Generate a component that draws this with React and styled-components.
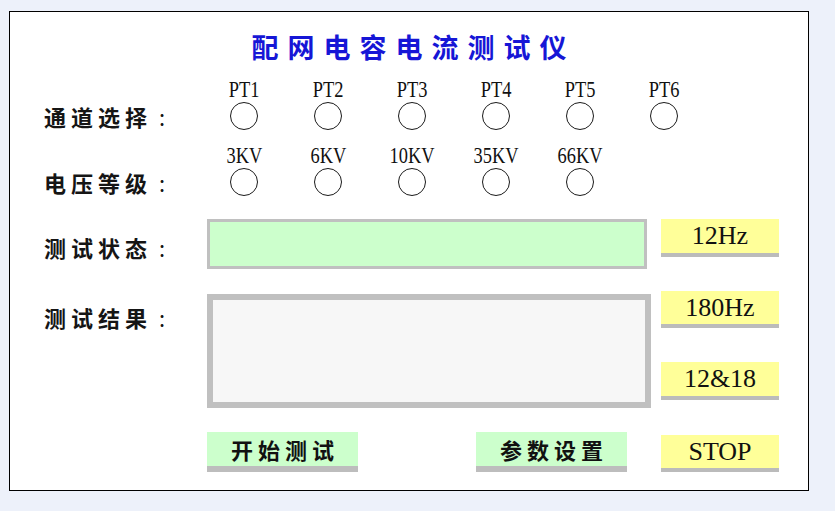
import React from 'react';
import styled, { createGlobalStyle } from 'styled-components';

const Global = createGlobalStyle`
  html, body { margin: 0; padding: 0; background: #edf1fa; }
  body { width: 835px; height: 511px; overflow: hidden; }
`;

const Page = styled.div`
  padding: 11px 0 0 9px;
`;

const Panel = styled.div`
  width: 798px;
  height: 478px;
  border: 1px solid #000;
  background: #fff;
  display: flex;
  flex-direction: column;
`;

const Title = styled.h1`
  margin: 20px 0 0 0;
  padding-left: 9px;
  text-align: center;
  font-family: "Noto Sans CJK SC", sans-serif;
  font-weight: 700;
  font-size: 27px;
  line-height: 30px;
  letter-spacing: 9px;
  color: #1616d6;
`;

const OptionRow = styled.div`
  display: flex;
  align-items: flex-end;
  margin-top: ${p => p.$top}px;
  padding-left: 34px;
`;

const Label = styled.div`
  width: ${p => p.$w}px;
  flex: none;
  display: flex;
  align-items: center;
  height: 28px;
  font-family: "Noto Sans CJK SC", sans-serif;
  font-weight: 700;
  font-size: 22px;
  letter-spacing: 5px;
  color: #151515;
  white-space: nowrap;
`;

const Colon = styled.span`
  margin-left: 7px;
  letter-spacing: 0;
  font-weight: 400;
`;

const RadioGroup = styled.div`
  display: flex;
`;

const RadioItem = styled.label`
  width: 84px;
  display: flex;
  flex-direction: column;
  align-items: center;
  gap: 1px;
`;

const RadioText = styled.span`
  display: block;
  font-family: "Liberation Serif", serif;
  font-size: 23px;
  line-height: 23px;
  color: #111;
  transform: scaleX(0.8);
`;

const Circle = styled.span`
  display: block;
  width: 28px;
  height: 28px;
  box-sizing: border-box;
  border: 1.6px solid #1a1a1a;
  border-radius: 50%;
  background: #fff;
`;

const Lower = styled.div`
  display: grid;
  grid-template-columns: 163px 454px 118px;
  margin-top: ${p => p.$top}px;
  padding-left: 34px;
`;

const Cell = styled.div`
  display: flex;
  flex-direction: column;
  padding-top: ${p => p.$pt || 0}px;
  gap: ${p => p.$gap || 0}px;
`;

const StatusBox = styled.div`
  width: 440px;
  height: 50px;
  box-sizing: border-box;
  border: 3px solid #c0c0c0;
  background: #ccffcc;
`;

const ResultBox = styled.div`
  width: 444px;
  height: 114px;
  box-sizing: border-box;
  border: 6px solid #c0c0c0;
  background: #f7f7f7;
`;

const FreqButton = styled.button`
  width: 118px;
  height: ${p => p.$h || 38}px;
  box-sizing: border-box;
  margin: 0;
  padding: 0;
  border: none;
  border-bottom: 4px solid #bbbbbb;
  background: #ffff99;
  font-family: "Liberation Serif", serif;
  font-size: 26px;
  color: #111;
  cursor: pointer;
`;

const ActionRow = styled.div`
  display: flex;
  gap: 118px;
`;

const ActionButton = styled.button`
  width: 151px;
  height: 40px;
  box-sizing: border-box;
  margin: 0;
  padding: 0 0 0 5px;
  border: none;
  border-bottom: 6px solid #bdbdbd;
  background: #ccffcc;
  font-family: "Noto Sans CJK SC", sans-serif;
  font-weight: 700;
  font-size: 22px;
  letter-spacing: 5px;
  color: #111;
  cursor: pointer;
`;

const channels = ['PT1', 'PT2', 'PT3', 'PT4', 'PT5', 'PT6'];
const voltages = ['3KV', '6KV', '10KV', '35KV', '66KV'];

function Options({ label, items, top }) {
  return (
    <OptionRow $top={top}>
      <Label $w={158}>{label}<Colon>:</Colon></Label>
      <RadioGroup>
        {items.map(t => (
          <RadioItem key={t}>
            <RadioText>{t}</RadioText>
            <Circle />
          </RadioItem>
        ))}
      </RadioGroup>
    </OptionRow>
  );
}

export default function App() {
  return (
    <>
      <Global />
      <Page>
        <Panel>
          <Title>配网电容电流测试仪</Title>
          <Options label="通道选择" items={channels} top={16} />
          <Options label="电压等级" items={voltages} top={14} />
          <Lower $top={23}>
            <Cell $pt={14}><Label $w={163}>测试状态<Colon>:</Colon></Label></Cell>
            <Cell><StatusBox /></Cell>
            <Cell><FreqButton>12Hz</FreqButton></Cell>
          </Lower>
          <Lower $top={22}>
            <Cell $pt={12}><Label $w={163}>测试结果<Colon>:</Colon></Label></Cell>
            <Cell $pt={3}><ResultBox /></Cell>
            <Cell $gap={34}>
              <FreqButton $h={37}>180Hz</FreqButton>
              <FreqButton>12&amp;18</FreqButton>
            </Cell>
          </Lower>
          <Lower $top={24}>
            <div />
            <ActionRow>
              <ActionButton>开始测试</ActionButton>
              <ActionButton>参数设置</ActionButton>
            </ActionRow>
            <Cell $pt={3}><FreqButton $h={37}>STOP</FreqButton></Cell>
          </Lower>
        </Panel>
      </Page>
    </>
  );
}
